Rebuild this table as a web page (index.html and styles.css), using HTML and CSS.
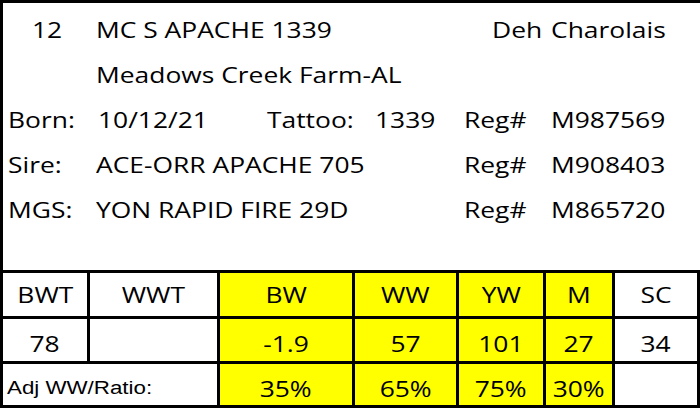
FILE: index.html
```html
<!DOCTYPE html>
<html>
<head>
<meta charset="utf-8">
<link rel="stylesheet" href="styles.css">
</head>
<body>
<div class="sheet">
  <div class="info">
    <div class="row">
      <span class="cell num"><span class="t">12</span></span>
      <span class="cell span3"><span class="t">MC S APACHE 1339</span></span>
      <span class="cell deh"><span class="t">Deh</span></span>
      <span class="cell"><span class="t">Charolais</span></span>
    </div>
    <div class="row">
      <span class="cell"></span>
      <span class="cell span5"><span class="t">Meadows Creek Farm-AL</span></span>
    </div>
    <div class="row">
      <span class="cell"><span class="t">Born:</span></span>
      <span class="cell date"><span class="t">10/12/21</span></span>
      <span class="cell"><span class="t">Tattoo:</span></span>
      <span class="cell"><span class="t">1339</span></span>
      <span class="cell"><span class="t">Reg#</span></span>
      <span class="cell"><span class="t">M987569</span></span>
    </div>
    <div class="row">
      <span class="cell"><span class="t">Sire:</span></span>
      <span class="cell span3"><span class="t">ACE-ORR APACHE 705</span></span>
      <span class="cell"><span class="t">Reg#</span></span>
      <span class="cell"><span class="t">M908403</span></span>
    </div>
    <div class="row">
      <span class="cell"><span class="t">MGS:</span></span>
      <span class="cell span3"><span class="t">YON RAPID FIRE 29D</span></span>
      <span class="cell"><span class="t">Reg#</span></span>
      <span class="cell"><span class="t">M865720</span></span>
    </div>
  </div>
  <div class="grid">
    <div class="g head"><span class="t">BWT</span></div>
    <div class="g head"><span class="t">WWT</span></div>
    <div class="g head y"><span class="t">BW</span></div>
    <div class="g head y"><span class="t">WW</span></div>
    <div class="g head y"><span class="t">YW</span></div>
    <div class="g head y"><span class="t">M</span></div>
    <div class="g head"><span class="t">SC</span></div>

    <div class="g val"><span class="t">78</span></div>
    <div class="g val"></div>
    <div class="g val y"><span class="t">-1.9</span></div>
    <div class="g val y"><span class="t">57</span></div>
    <div class="g val y"><span class="t">101</span></div>
    <div class="g val y"><span class="t">27</span></div>
    <div class="g val"><span class="t">34</span></div>

    <div class="g ratio adj"><span class="ta">Adj WW/Ratio:</span></div>
    <div class="g ratio y"><span class="t">35%</span></div>
    <div class="g ratio y"><span class="t">65%</span></div>
    <div class="g ratio y"><span class="t">75%</span></div>
    <div class="g ratio y"><span class="t">30%</span></div>
    <div class="g ratio"></div>
  </div>
</div>
</body>
</html>
```

FILE: styles.css
```css
html, body {
  margin: 0;
  padding: 0;
  background: #ffffff;
}

.sheet {
  width: 700px;
  height: 408px;
  overflow: hidden;
  font-family: "Open Sans", "Liberation Sans", sans-serif;
  font-size: 22px;
  color: #000;
}

.t {
  display: inline-block;
  white-space: nowrap;
  transform: scaleX(1.2);
  transform-origin: left center;
}

.info {
  box-sizing: border-box;
  height: 270px;
  border-top: 3px solid #000;
  border-left: 3px solid #000;
  padding: 4px 0 0 5px;
}

.row {
  display: grid;
  grid-template-columns: 88px 171px 108px 89px 87px 1fr;
  height: 45px;
  line-height: 45px;
}

.cell {
  white-space: nowrap;
}

.num {
  padding-left: 24px;
}

.deh {
  padding-left: 28px;
}

.date {
  padding-left: 2px;
}

.span3 {
  grid-column: span 3;
}

.span5 {
  grid-column: span 5;
}

.grid {
  box-sizing: border-box;
  width: 700px;
  display: grid;
  grid-template-columns: 84px 127px 132px 101px 84px 66px 82px;
  grid-template-rows: 43px 42px 41px;
  gap: 3px;
  padding: 3px;
  background: #000;
}

.g {
  background: #fff;
  text-align: center;
  white-space: nowrap;
}

.g .t {
  transform-origin: center center;
}

.g.y {
  background: #ffff00;
}

.head {
  line-height: 43px;
}

.val {
  line-height: 48px;
}

.ratio {
  line-height: 49px;
}

.adj {
  grid-column: span 2;
  text-align: left;
  line-height: 43px;
  padding-left: 4px;
}

.ta {
  display: inline-block;
  white-space: nowrap;
  font-family: "Liberation Sans", Arial, sans-serif;
  font-size: 18px;
  transform: scaleX(1.24);
  transform-origin: left center;
}
```
